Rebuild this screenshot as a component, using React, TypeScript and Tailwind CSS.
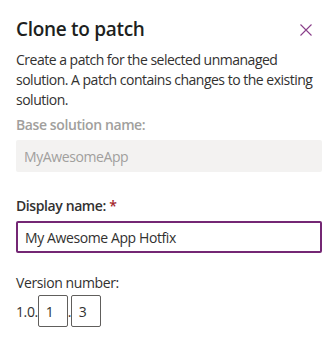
import React from "react";

export default function App() {
  return (
    <div
      className="min-h-[361px] w-[335px] bg-white pl-4 pr-[13px] text-[#323130]"
      style={{ fontFamily: '"Open Sans", "Noto Sans", sans-serif' }}
    >
      <div className="flex items-center justify-between pt-[15px]">
        <h1 className="text-[19px] font-semibold leading-[28px] tracking-[-0.3px] text-[#201f1e]">Clone to patch</h1>
        <button className="mr-[8px] mt-[2px] flex h-4 w-4 items-center justify-center text-[#8a3f8a]">
          <svg width="12" height="12" viewBox="0 0 12 12" fill="none" stroke="currentColor" strokeWidth="1.1">
            <path d="M0.5 0.5L11.5 11.5M11.5 0.5L0.5 11.5" />
          </svg>
        </button>
      </div>

      <p className="mt-[7px] text-[14px] leading-[20px] tracking-[-0.5px]">
        Create a patch for the selected unmanaged solution. A patch contains changes to the existing solution.
      </p>

      <label className="mt-[5px] block text-[14px] font-semibold leading-[20px] tracking-[-0.4px] text-[#a19f9d]">
        Base solution name:
      </label>
      <div className="mt-[5px] flex h-8 items-center rounded-[2px] bg-[#f3f2f1] px-2 text-[14px] tracking-[-0.4px] text-[#a19f9d]">
        MyAwesomeApp
      </div>

      <label className="mt-[24px] block text-[14px] font-semibold leading-[20px] tracking-[-0.4px]">
        Display name: <span className="text-[#a4262c]">*</span>
      </label>
      <div className="mt-[5px] flex h-8 items-center rounded-[2px] border-2 border-[#742774] px-[7px] text-[14px] tracking-[-0.4px]">
        My Awesome App Hotfix
      </div>

      <div className="mt-[20px] text-[14px] leading-[20px] tracking-[-0.4px]">Version number:</div>
      <div className="mt-[2px] flex items-center text-[14px] tracking-[-0.4px]">
        <span>1.0.</span>
        <div className="flex h-8 w-[30px] items-center rounded-[2px] border border-[#605e5c] px-[7px]">1</div>
        <span className="w-[3px]">.</span>
        <div className="flex h-8 w-[30px] items-center rounded-[2px] border border-[#605e5c] px-[7px]">3</div>
      </div>
    </div>
  );
}
